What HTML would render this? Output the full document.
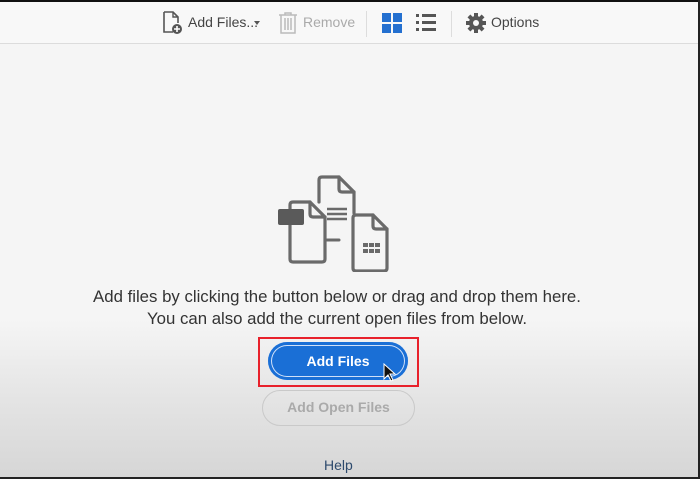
<!DOCTYPE html>
<html><head><style>
*{margin:0;padding:0;box-sizing:border-box}
body{width:700px;height:479px;overflow:hidden;font-family:"Liberation Sans",sans-serif;position:relative;background:linear-gradient(#f5f5f5 0,#f5f5f5 320px,#e4e4e4 400px,#d6d6d6 477px);}
.top{position:absolute;left:0;top:0;width:700px;height:2px;background:#111}
.bar{position:absolute;left:0;top:2px;width:700px;height:42px;background:#f8f8f8;border-bottom:1px solid #dcdcdc}
.t{position:absolute;top:14px;font-size:14px;color:#444}
.sep{position:absolute;top:9px;width:1px;height:26px;background:#ddd}
.msg{position:absolute;left:0;width:674px;text-align:center;font-size:16.8px;color:#333}
.red{position:absolute;left:258px;top:337px;width:161px;height:50px;border:2px solid #e8212b}
.b1{position:absolute;left:268px;top:342px;width:140px;height:38px;border-radius:19px;background:#1a6fd6;color:#fff;font-weight:bold;font-size:14px;text-align:center;line-height:38px;box-shadow:inset 0 0 0 3px #1a6fd6,inset 0 0 0 4px #cfe0f8}
.b2{position:absolute;left:262px;top:390px;width:153px;height:36px;border-radius:18px;border:1.5px solid #c9c9c9;color:#aaa;font-weight:bold;font-size:14px;text-align:center;line-height:33px}
.help{position:absolute;left:324px;top:457px;font-size:14px;color:#2d4a6d}
.rb{position:absolute;right:0;top:0;width:2px;height:479px;background:#222}
.bb{position:absolute;left:0;bottom:0;width:700px;height:2px;background:#222}
</style></head><body>
<div class="top"></div>
<div class="bar">
<svg style="position:absolute;left:162px;top:9px" width="22" height="24" viewBox="0 0 22 24"><path d="M2 1h9l5 5v6M2 1v20h9" fill="none" stroke="#555" stroke-width="1.6"/><path d="M11 1v5h5" fill="none" stroke="#555" stroke-width="1.4"/><circle cx="15" cy="18" r="5" fill="#555"/><path d="M15 15v6M12 18h6" stroke="#fff" stroke-width="1.6"/></svg>
<div class="t" style="left:188px;top:12px">Add Files...</div>
<div style="position:absolute;left:254px;top:19px;border:3.5px solid transparent;border-top:4px solid #555"></div>
<svg style="position:absolute;left:278px;top:10px" width="20" height="22" viewBox="0 0 20 22"><path d="M1 3h18M7 3V1h6v2M3 3v18h14V3M7 6v12M10 6v12M13 6v12" fill="none" stroke="#bbb" stroke-width="1.5"/></svg>
<div class="t" style="left:303px;top:12px;color:#aaa">Remove</div>
<div class="sep" style="left:366px"></div>
<svg style="position:absolute;left:382px;top:11px" width="20" height="20"><rect x="0" y="0" width="9" height="9" fill="#2470d0"/><rect x="11" y="0" width="9" height="9" fill="#2470d0"/><rect x="0" y="11" width="9" height="9" fill="#2470d0"/><rect x="11" y="11" width="9" height="9" fill="#2470d0"/></svg>
<svg style="position:absolute;left:416px;top:12px" width="20" height="18"><g fill="#555"><rect x="0" y="0" width="3" height="3"/><rect x="6" y="0" width="14" height="3"/><rect x="0" y="7" width="3" height="3"/><rect x="6" y="7" width="14" height="3"/><rect x="0" y="14" width="3" height="3"/><rect x="6" y="14" width="14" height="3"/></g></svg>
<div class="sep" style="left:451px"></div>
<svg style="position:absolute;left:466px;top:11px" width="20" height="20" viewBox="-10 -10 20 20"><g fill="#555"><circle r="7"/><g id="k"><rect x="-2" y="-10" width="4" height="20"/></g><use href="#k" transform="rotate(45)"/><use href="#k" transform="rotate(90)"/><use href="#k" transform="rotate(135)"/></g><circle r="3" fill="#f8f8f8"/></svg>
<div class="t" style="left:491px;top:12px">Options</div>
</div>
<svg style="position:absolute;left:275px;top:172px" width="126" height="100" viewBox="0 0 126 100" fill="none" stroke="#6a6a6a" stroke-width="3.2" stroke-linejoin="round" stroke-linecap="round">
<path d="M44 30V8q0-3 3-3h17l15 15v21"/><path d="M64 5v12q0 3 3 3h12"/>
<path d="M52 37h20M52 42h20M52 47h20" stroke-width="2.5" stroke-linecap="butt"/>
<path d="M15 52v35q0 3 3 3h29q3 0 3-3V45L35 30H18q-3 0-3 3v4"/><path d="M35 30v12q0 3 3 3h12"/>
<rect x="3" y="37" width="26" height="16" rx="2" fill="#5a5a5a" stroke="none"/>
<path d="M52 68h12" stroke-width="3"/>
<path d="M81 43h17l14 14v39q0 3-3 3H81q-3 0-3-3V46q0-3 3-3z"/><path d="M98 43v11q0 3 3 3h11"/>
<g fill="#6a6a6a" stroke="none"><rect x="88" y="71" width="5" height="4"/><rect x="94" y="71" width="5" height="4"/><rect x="100" y="71" width="5" height="4"/><rect x="88" y="77" width="5" height="4"/><rect x="94" y="77" width="5" height="4"/><rect x="100" y="77" width="5" height="4"/></g>
</svg>
<div class="msg" style="top:287px">Add files by clicking the button below or drag and drop them here.</div>
<div class="msg" style="top:309px">You can also add the current open files from below.</div>
<div class="red"></div>
<div class="b1">Add Files</div>
<svg style="position:absolute;left:383px;top:363px" width="14" height="20" viewBox="0 0 14 20"><path d="M1 1v15l4-4 3 6 2-1-3-6h5z" fill="#111" stroke="#fff" stroke-width="1"/></svg>
<div class="b2">Add Open Files</div>
<div class="help">Help</div>
<div class="rb"></div><div class="bb"></div>
</body></html>
